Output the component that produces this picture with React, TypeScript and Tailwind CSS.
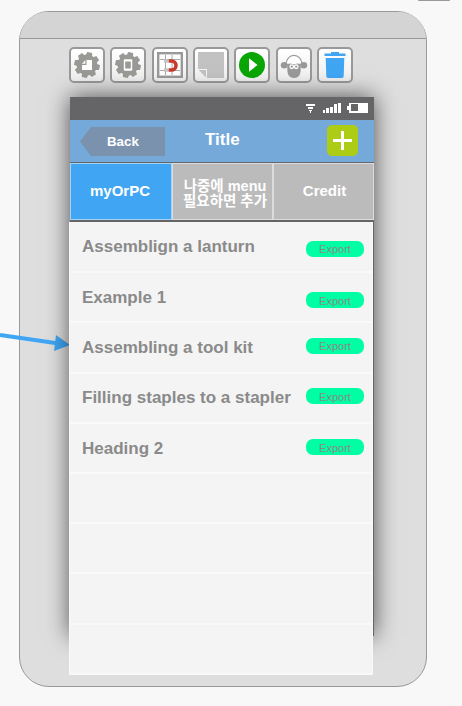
import type { ReactNode } from "react";

const teeth = [0, 45, 90, 135, 180, 225, 270, 315];

function Gear({ children }: { children: ReactNode }) {
  return (
    <svg width="26" height="26" viewBox="-13 -13 26 26">
      <circle r="10.4" fill="#999995" />
      {teeth.map((angle) => (
        <path key={angle} d="M-3.4-8.5L-2.5-12.8L2.5-12.8L3.4-8.5Z" fill="#999995" transform={`rotate(${angle + 12})`} />
      ))}
      {children}
    </svg>
  );
}

function GearPage() {
  return (
    <Gear>
      <path d="M-.5-5H5V5H-5V0H-.5Z" fill="#fff" />
      <path d="M-5-1.2L-1.7-4.7V-1.2Z" fill="#fff" />
    </Gear>
  );
}

function GearPhone() {
  return (
    <Gear>
      <rect x="-4.2" y="-5.8" width="8.4" height="11.6" rx="1" fill="#fff" />
      <rect x="-2.8" y="-3.5" width="5.6" height="7" fill="#999995" />
    </Gear>
  );
}

function MagnetGrid() {
  return (
    <svg width="26" height="26" viewBox="0 0 26 26">
      <rect x="1.2" y="1.2" width="23.6" height="23.6" fill="#fff" stroke="#999" strokeWidth="2.4" />
      <path d="M8.5 3V23M15 3V23M3 7.5H23M3 18.5H23" stroke="#aaa" strokeWidth="1" />
      <path d="M11.5 9H14.5A4.2 4.2 0 0 1 14.5 18H11.5" fill="none" stroke="#c83a2b" strokeWidth="3.6" />
      <path d="M7 9H11.5M7 18H11.5" stroke="#c4c4c4" strokeWidth="3.6" />
    </svg>
  );
}

function Note() {
  return (
    <svg width="28" height="28" viewBox="0 0 28 28">
      <path d="M1 1H27V27H10V18H1Z" fill="#c2c2c2" />
      <path d="M1.5 19H9V26.5Z" fill="#c2c2c2" />
    </svg>
  );
}

function Play() {
  return (
    <svg width="26" height="26" viewBox="0 0 26 26">
      <circle cx="13" cy="13" r="13" fill="#0aa605" />
      <path d="M10 6.2L18.5 13L10 19.8Z" fill="#fff" />
    </svg>
  );
}

function Sheep() {
  return (
    <svg width="28" height="28" viewBox="0 0 28 28">
      <ellipse cx="4.2" cy="14.3" rx="3.4" ry="3.2" fill="#999" />
      <ellipse cx="23.8" cy="14.3" rx="3.4" ry="3.2" fill="#999" />
      <path d="M7.3 13H20.7V19C20.7 24 18 27 14 27S7.3 24 7.3 19Z" fill="#999" />
      <path d="M6.2 12.7A7.8 8.3 0 0 1 21.8 12.7Q19 14 17.5 13Q14 14.2 10.5 13Q8 14 6.2 12.7Z" fill="#fff" stroke="#999" strokeWidth="1.2" />
      <circle cx="11.8" cy="15.7" r="1.8" fill="none" stroke="#fff" strokeWidth="1.3" />
      <circle cx="16.2" cy="15.7" r="1.8" fill="none" stroke="#fff" strokeWidth="1.3" />
    </svg>
  );
}

function Trash() {
  return (
    <svg width="22" height="28" viewBox="0 0 22 28">
      <path d="M.5 2.5H7V1H15V2.5H21.5V5H.5Z" fill="#40a6f4" />
      <path d="M1.7 7H20.3L19.7 25.3Q19.7 27 18 27H4Q2.3 27 2.3 25.3Z" fill="#40a6f4" />
    </svg>
  );
}

const tools = [GearPage, GearPhone, MagnetGrid, Note, Play, Sheep, Trash];

const rows = [
  { title: "Assemblign a lanturn", text: "mt-[14px]", offset: "mt-[18px] leading-[17px]" },
  { title: "Example 1", text: "mt-[15px]", offset: "mt-[19px] leading-[19px]" },
  { title: "Assembling a tool kit", text: "mt-[15px]", offset: "mt-[15px] leading-[17px]" },
  { title: "Filling staples to a stapler", text: "mt-[14px]", offset: "mt-[14px] leading-[19px]" },
  { title: "Heading 2", text: "mt-[15px]", offset: "mt-[15px] leading-[19px]" },
  { title: "", text: "", offset: "" },
  { title: "", text: "", offset: "" },
  { title: "", text: "", offset: "" },
  { title: "", text: "", offset: "" },
];

function StatusBar() {
  return (
    <div className="flex h-[23px] justify-end bg-[#656467] pt-[6px] pr-[5px]">
      <svg width="63" height="11" viewBox="0 0 63 11" fill="#fff" shapeRendering="crispEdges">
        <path d="M0 1H9V3H0ZM2 4H7V6H2ZM3 7H6V8H5V10H4V8H3Z" />
        <path d="M17 7H19V10H17ZM20 5H23V10H20ZM24 4H27V10H24ZM28 1H31V10H28ZM32 0H35V10H32Z" />
        <path d="M43 0H62V10H43V7H41V3H43ZM45 1V8H52V1Z" fillRule="evenodd" />
      </svg>
    </div>
  );
}

function NavBar() {
  return (
    <div className="flex h-[42px] bg-[#74a9da]">
      <div className="relative mt-[7px] ml-[10px] h-[29px] w-[85px]">
        <svg className="absolute inset-0" width="85" height="29">
          <path d="M0 14.5L11 0H85V29H11Z" fill="#7b92af" />
        </svg>
        <span className="relative block pl-[27px] text-[13.3px] leading-[29px] font-bold text-white">Back</span>
      </div>
      <div className="ml-[40px] w-[122px] text-[17px] leading-[39px] font-bold text-white">Title</div>
      <div className="mt-[5px] flex h-[31px] w-[31px] items-center justify-center rounded-[5px] bg-[#adcc16]">
        <svg width="19" height="19" viewBox="0 0 19 19" stroke="#fff" strokeWidth="3">
          <path d="M9.5 0V19M0 9.5H19" />
        </svg>
      </div>
    </div>
  );
}

function Tabs() {
  return (
    <div className="flex h-[60px] border-t border-b-2 border-[#656467] text-center text-[15px] leading-[15px] font-bold text-white">
      <div className="flex w-[102px] items-center justify-center border border-[#a3d2f6] bg-[#40a6f4] pr-[2px] pb-[2px]">myOrPC</div>
      <div className="flex w-[101px] items-center justify-center border border-[#dcdcdc] bg-[#bbb] pl-[5px] text-[14.5px] whitespace-nowrap">
        <span className="pt-[4px]">나중에 menu<br />필요하면 추가</span>
      </div>
      <div className="flex w-[101px] items-center justify-center border border-[#dcdcdc] bg-[#bbb] pb-[2px] pl-[2px]">Credit</div>
    </div>
  );
}

export default function App() {
  return (
    <div className="relative h-[706px] w-[462px] overflow-hidden bg-[#f8f8f8] pt-[11px] pl-[19px] font-['Liberation_Sans','Noto_Sans_CJK_KR',sans-serif]">
      <div className="absolute top-0 left-[418px] h-px w-[32px] rounded-b-sm bg-[#999]" />
      <div className="h-[676px] w-[408px] rounded-[30px] border border-[#999] bg-[#dedede]">
        <div className="h-[27px] rounded-t-[29px] border-b border-[#999] bg-[#d4d4d4]" />
        <div className="mt-[8px] ml-[49px] flex w-[284px] justify-between">
          {tools.map((Icon, i) => (
            <div key={i} className="flex h-[36px] w-[36px] items-center justify-center rounded-[5px] border-2 border-[#999] bg-linear-to-b from-white to-[#eee]">
              <Icon />
            </div>
          ))}
        </div>
        <svg className="absolute top-[325px] left-0" width="72" height="34" viewBox="0 325 72 34" fill="#40a6f4">
          <path d="M0 335L57 343.3" stroke="#40a6f4" strokeWidth="4" />
          <path d="M56 335L70 345L54 351Z" />
        </svg>
        <div className="relative mt-[14px] ml-[50px] h-[539px] w-[304px] border-r border-[#656467] bg-[#656467] shadow-[0_0_22px_rgba(0,0,0,0.65)]">
          <div className="w-[304px]">
            <StatusBar />
            <NavBar />
            <Tabs />
          </div>
          <div className="-ml-px w-[304px] bg-[#f4f4f4] pt-px">
            {rows.map((row, i) => (
              <div key={i} className="flex h-[50.2px] justify-between border-x border-b-2 border-[#f9f9f9] pr-[8px] pl-[12px]">
                <span className={`text-[17px] leading-[20px] font-bold whitespace-nowrap text-[#8a8a8a] ${row.text}`}>{row.title}</span>
                {row.title && (
                  <span className={`h-[16px] w-[58px] shrink-0 rounded-[7px] bg-[#00ffa5] text-center text-[11px] text-[#8a8a8a] ${row.offset}`}>Export</span>
                )}
              </div>
            ))}
          </div>
        </div>
      </div>
    </div>
  );
}
